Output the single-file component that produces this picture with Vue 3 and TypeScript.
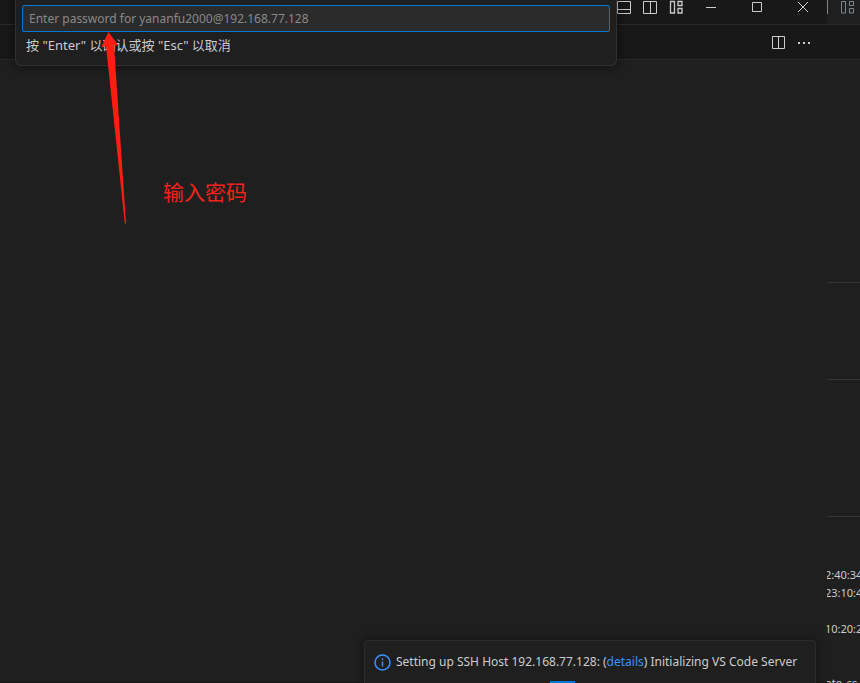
<script setup lang="ts">
import { ref } from 'vue'

const password = ref('')
const host = '192.168.77.128'
const user = 'yananfu2000'
const sections: { id: string; lines: string[] }[] = [
  { id: 'top', lines: [] },
  { id: 'upper', lines: [] },
  { id: 'middle', lines: [] },
  { id: 'log', lines: ['2:40:34', '23:10:4', '', '10:20:2', '', '', 'ote_ss'] },
]
</script>

<template>
  <div class="desktop">
    <main class="window">
      <header class="titlebar">
        <div class="layout-actions">
          <button type="button" aria-label="Toggle panel">
            <svg width="16" height="16" viewBox="0 0 16 16"><path d="M1.5 1.5h13v12h-13zM1.5 9.5h13" /></svg>
          </button>
          <button type="button" aria-label="Toggle secondary side bar">
            <svg width="16" height="16" viewBox="0 0 16 16"><path d="M1.5 1.5h13v12h-13zM8.5 1.5v12" /></svg>
          </button>
          <button type="button" aria-label="Customize layout">
            <svg width="16" height="16" viewBox="0 0 16 16"><path class="bold" d="M2.500 1.500h4v11.500h-4zM10 1.500h4v4h-4zM10 8.500h4v4.500h-4z" /></svg>
          </button>
        </div>
        <div class="window-actions">
          <button type="button" aria-label="Minimize">
            <svg width="10" height="10" viewBox="0 0 10 10"><path d="M0 5.5h10" /></svg>
          </button>
          <button type="button" aria-label="Maximize">
            <svg width="10" height="10" viewBox="0 0 10 10"><path d="M.5.5h9v9h-9z" /></svg>
          </button>
          <button type="button" aria-label="Close">
            <svg width="10" height="10" viewBox="0 0 10 10"><path d="M0 0l10 10M10 0L0 10" /></svg>
          </button>
        </div>
      </header>
      <nav class="tabs">
        <button type="button" aria-label="Split editor">
          <svg width="16" height="16" viewBox="0 0 16 16"><path d="M2.500 2.500h12v12h-12zM8.500 2.500v12" /></svg>
        </button>
        <button type="button" aria-label="More actions">
          <svg class="dots" width="16" height="16" viewBox="0 0 16 16"><path d="M2 8h2v2H2zM7 8h2v2H7zM12 8h2v2h-2z" /></svg>
        </button>
      </nav>
      <section class="editor"></section>
      <div class="statusbar"></div>

      <form class="quick-input" @submit.prevent>
        <input
          v-model="password"
          type="password"
          :placeholder="`Enter password for ${user}@${host}`"
          aria-label="Password"
          aria-describedby="hint"
        />
        <p id="hint">按 "Enter" 以确认或按 "Esc" 以取消</p>
      </form>

      <svg class="arrow" width="32" height="192" viewBox="0 0 32 192">
        <path d="M10.500 0L20.500 13.500L16 13L28 191.500H26.800L8 14L3 15.500Z" />
      </svg>
      <span class="annotation">输入密码</span>

      <aside class="toast" role="status">
        <div class="message">
          <svg class="info" width="17" height="17" viewBox="0 0 17 17">
            <circle cx="8.500" cy="8.500" r="7.500" />
            <path d="M8.500 7.500v5M8.500 4.500v1.500" />
          </svg>
          <span>Setting up SSH Host {{ host }}: (<a href="#details">details</a>) Initializing VS Code Server</span>
        </div>
        <div class="progress"></div>
      </aside>
    </main>

    <aside class="behind">
      <header class="behind-title">
        <svg width="30" height="16" viewBox="0 0 30 16"><path d="M.5 0v14M14.500 1.500h4v11.500h-4zM22.500 1.500h4v4h-4zM22.500 8.500h4v4.500h-4z" /></svg>
      </header>
      <div class="behind-tabs"></div>
      <section v-for="section in sections" :key="section.id" :class="['pane', section.id]">
        <p v-for="(line, index) in section.lines" :key="index">{{ line }}</p>
      </section>
    </aside>
  </div>
</template>

<style>
body {
  background: #1f1f1f;
  overflow: hidden;
}
</style>

<style scoped>
.desktop {
  display: flex;
  height: 100vh;
  overflow: hidden;
  background: #1f1f1f;
  color: #cccccc;
  font: 12px/18px 'Noto Sans', 'Noto Sans CJK SC', sans-serif;
}

.desktop * {
  box-sizing: border-box;
}

p {
  margin: 0;
}

button {
  display: flex;
  align-items: center;
  justify-content: center;
  padding: 0;
  border: 0;
  background: none;
  color: inherit;
}

svg {
  flex: none;
  fill: none;
  stroke: currentColor;
}

.window {
  position: relative;
  display: flex;
  flex: 1;
  flex-direction: column;
  min-width: 0;
}

.titlebar {
  display: flex;
  flex: none;
  align-items: flex-start;
  justify-content: flex-end;
  height: 25px;
  padding-right: 1px;
  border-bottom: 1px solid #2b2b2b;
  background: #181818;
}

.layout-actions {
  display: flex;
  gap: 10px;
  padding-right: 4px;
}

.window-actions {
  display: flex;
}

.window-actions button {
  width: 46px;
  height: 14px;
}

.tabs {
  display: flex;
  flex: none;
  align-items: center;
  justify-content: flex-end;
  gap: 10px;
  height: 35px;
  padding-right: 15px;
  border-bottom: 1px solid #2b2b2b;
  background: #181818;
}

.dots {
  fill: currentColor;
  stroke: none;
}

.bold {
  stroke-width: 1.3;
}

.editor {
  flex: 1;
}

.statusbar {
  flex: none;
  height: 1px;
  background: #181818;
}

.quick-input {
  position: absolute;
  top: -1px;
  left: 15px;
  width: calc(100% - 225px);
  height: 67px;
  padding: 6px;
  border: 1px solid #313131;
  border-top: 0;
  border-radius: 0 0 6px 6px;
  background: #1f1f1f;
  box-shadow: 0 0 8px 2px rgba(0, 0, 0, 0.36);
}

.quick-input input {
  display: block;
  width: 100%;
  height: 27px;
  padding: 0 6px;
  border: 1px solid #0078d4;
  border-radius: 2px;
  outline: 0;
  background: #2b2b2b;
  color: #cccccc;
  font: inherit;
}

.quick-input input::placeholder {
  color: #898989;
  opacity: 1;
}

.quick-input p {
  padding: 4px;
  font-size: 13px;
}

.arrow {
  position: absolute;
  top: 32px;
  left: 98px;
  fill: #ff1c10;
  stroke: none;
}

.annotation {
  position: absolute;
  top: 176px;
  left: 163px;
  color: #f5221a;
  font-size: 21px;
  line-height: 32px;
}

.toast {
  position: absolute;
  right: 11px;
  bottom: 0;
  display: flex;
  flex-direction: column;
  justify-content: space-between;
  width: 452px;
  height: 43px;
  border: 1px solid #2b2b2b;
  border-bottom: 0;
  border-radius: 4px 4px 0 0;
  background: #1f1f1f;
  box-shadow: 0 0 8px 2px rgba(0, 0, 0, 0.3);
  white-space: nowrap;
}

.message {
  display: flex;
  align-items: center;
  gap: 5px;
  padding: 12px 0 0 9px;
}

.info {
  color: #3794ff;
  stroke-width: 1.5;
}

.toast a {
  color: #3794ff;
  text-decoration: none;
}

.progress {
  width: 25px;
  height: 2px;
  margin-left: 185px;
  background: #0078d4;
}

.behind {
  display: flex;
  flex: none;
  flex-direction: column;
  width: 33px;
  overflow: hidden;
  white-space: nowrap;
}

.behind-title {
  flex: none;
  height: 25px;
  border-bottom: 1px solid #2b2b2b;
  color: #7f858c;
}

.behind-tabs {
  flex: none;
  height: 35px;
  border-bottom: 1px solid #2b2b2b;
  background: #181818;
}

.pane {
  flex: none;
  border-bottom: 1px solid #333333;
}

.top {
  height: 223px;
}

.upper {
  height: 97px;
}

.middle {
  height: 137px;
}

.log {
  margin-left: -2px;
  padding-top: 49px;
  border: 0;
  font-size: 11px;
}

.log p {
  height: 18px;
}
</style>
